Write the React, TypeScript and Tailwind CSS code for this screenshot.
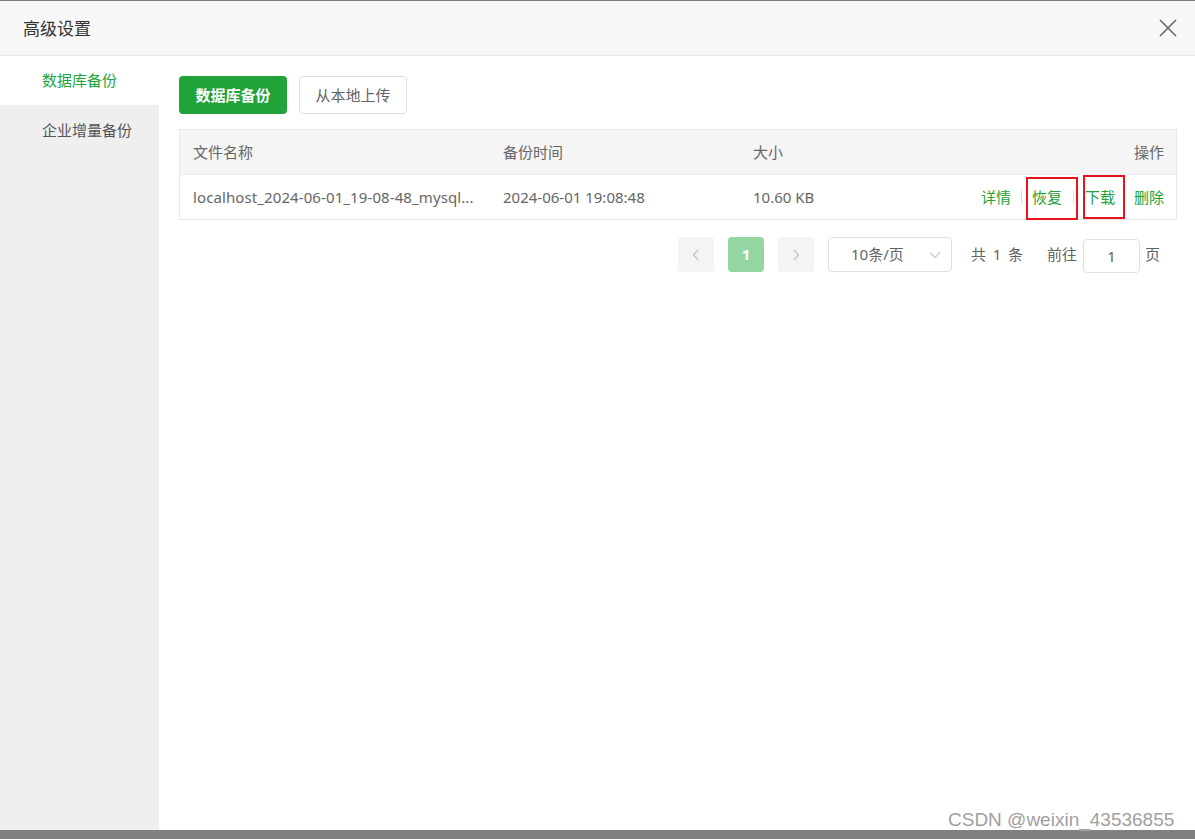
import React from 'react'

const font = { fontFamily: '"Noto Sans", "Noto Sans CJK SC", sans-serif' }

const App: React.FC = () => {
  return (
    <div className="w-[1195px] h-[839px] flex flex-col bg-[#808080] overflow-hidden" style={font}>
      <div className="h-px bg-[#7a7a7a]" />
      {/* Dialog */}
      <div className="flex flex-col h-[829px] bg-white">
        {/* Header */}
        <div className="h-[55px] shrink-0 flex items-center justify-between bg-[#f7f7f7] border-b border-[#e6e6e6] pl-[23px] pr-[18px]">
          <span className="text-[17px] text-[#333] mt-[1px]">高级设置</span>
          <svg width="18" height="18" viewBox="0 0 18 18" className="mt-[-1px]">
            <path d="M1 1 L17 17 M17 1 L1 17" stroke="#666" strokeWidth="1.6" fill="none" />
          </svg>
        </div>

        <div className="flex flex-1">
          {/* Sidebar */}
          <div className="w-[159px] shrink-0 bg-[#efefef] flex flex-col">
            <div className="h-[49px] bg-white flex items-center pl-[42px] text-[15px] text-[#22a33a]">数据库备份</div>
            <div className="h-[50px] flex items-center pl-[42px] text-[15px] text-[#555]">企业增量备份</div>
          </div>

          {/* Main */}
          <div className="flex-1 pt-5 pl-5 pr-[18px]">
            <div className="flex gap-3">
              <button className="w-[108px] h-[38px] rounded bg-[#22a33a] text-white text-[15px] font-bold">数据库备份</button>
              <button className="w-[108px] h-[38px] rounded border border-[#dcdfe6] bg-white text-[#606266] text-[15px]">从本地上传</button>
            </div>

            {/* Table */}
            <div className="mt-[15px] border border-[#e4e7ed] text-[15px] text-[#666]">
              <div className="flex h-[45px] items-center bg-[#f5f5f5] border-b border-[#ebeef5]">
                <div className="w-[310px] pl-[13px]">文件名称</div>
                <div className="w-[250px] pl-[13px]">备份时间</div>
                <div className="flex-1 pl-[13px]">大小</div>
                <div className="pr-[12px]">操作</div>
              </div>
              <div className="relative flex h-[44px] items-center">
                <div className="w-[310px] pl-[13px] pr-[6px] truncate tracking-[0.1px]">localhost_2024-06-01_19-08-48_mysql...</div>
                <div className="w-[250px] pl-[13px]">2024-06-01 19:08:48</div>
                <div className="flex-1 pl-[13px]">10.60 KB</div>
                <div className="flex items-center pr-[12px] text-[#22a33a]">
                  <span>详情</span>
                  <span className="mx-[10px] w-px h-[14px] bg-[#dcdcdc]" />
                  <span>恢复</span>
                  <span className="mx-[11px] w-px h-[14px] bg-[#dcdcdc]" />
                  <span>下载</span>
                  <span className="w-[19px]" />
                  <span>删除</span>
                </div>
                {/* annotation boxes */}
                <div className="absolute left-[846px] top-[2px] w-[52px] h-[43px] border-2 border-[#e8141c]" />
                <div className="absolute left-[903px] top-0 w-[42px] h-[44px] border-2 border-[#e8141c]" />
              </div>
            </div>

            {/* Pagination */}
            <div className="mt-[16px] mr-[17px] flex items-center justify-end text-[15px] text-[#606266]">
              <div className="w-9 h-[35px] rounded-sm bg-[#f4f4f5] flex items-center justify-center">
                <svg width="10" height="12" viewBox="0 0 10 12"><path d="M7 1 L2.5 6 L7 11" stroke="#c0c4cc" strokeWidth="1.3" fill="none" /></svg>
              </div>
              <div className="ml-[14px] w-9 h-[35px] rounded-sm bg-[#95d5a1] text-white font-bold flex items-center justify-center">1</div>
              <div className="ml-[14px] w-9 h-[35px] rounded-sm bg-[#f4f4f5] flex items-center justify-center">
                <svg width="10" height="12" viewBox="0 0 10 12"><path d="M3 1 L7.5 6 L3 11" stroke="#c0c4cc" strokeWidth="1.3" fill="none" /></svg>
              </div>
              <div className="ml-[14px] w-[124px] h-[35px] rounded border border-[#dcdfe6] flex items-center pl-[22px] pr-[10px] justify-between">
                <span>10条/页</span>
                <svg width="12" height="8" viewBox="0 0 12 8"><path d="M1 1.5 L6 6.5 L11 1.5" stroke="#c0c4cc" strokeWidth="1.1" fill="none" /></svg>
              </div>
              <span className="ml-[19px] w-[52px] flex justify-between"><span>共</span><span>1</span><span>条</span></span>
              <span className="ml-[24px]">前往</span>
              <div className="ml-[6px] mt-[3px] w-[57px] h-[34px] rounded border border-[#dcdfe6] flex items-center justify-center">1</div>
              <span className="ml-[5px]">页</span>
            </div>
          </div>
        </div>
      </div>
      <div className="flex-1 bg-[#808080]" />
      <span
        className="absolute left-[948px] top-[806px] text-[19px] text-[#a0a0a0]"
        style={{ fontFamily: '"Liberation Sans", Arial, sans-serif', textShadow: '0 0 1px #fff' }}
      >
        CSDN @weixin_43536855
      </span>
    </div>
  )
}

export default App
